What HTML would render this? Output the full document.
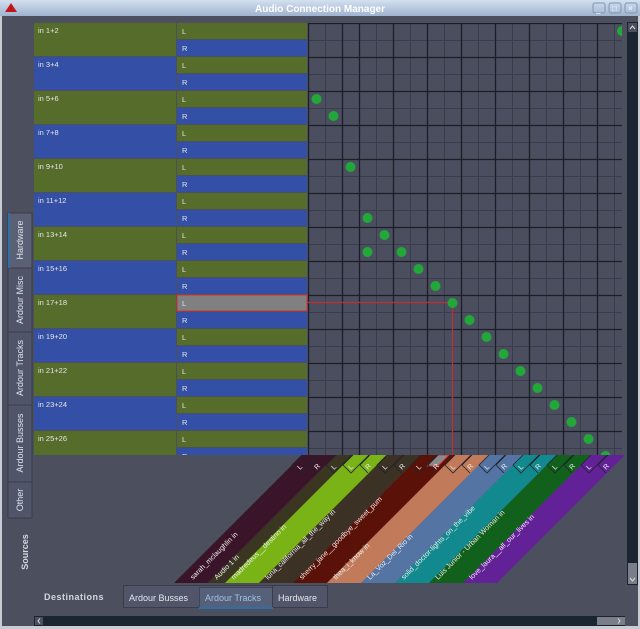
<!DOCTYPE html>
<html><head><meta charset="utf-8"><style>
html,body{margin:0;padding:0;width:640px;height:629px;overflow:hidden;background:#4b4f5e;font-family:"Liberation Sans",sans-serif}
svg{display:block}
</style></head><body>
<svg width="640" height="629" viewBox="0 0 640 629" font-family="Liberation Sans, sans-serif">
<defs>
<linearGradient id="tb" x1="0" y1="0" x2="0" y2="1"><stop offset="0" stop-color="#d3e0f0"/><stop offset="1" stop-color="#9fb3cf"/></linearGradient>
<clipPath id="lc"><rect x="0" y="23" width="640" height="432"/></clipPath>
<clipPath id="gc"><rect x="308" y="23" width="314" height="432"/></clipPath>
<clipPath id="bc"><rect x="34" y="455" width="590" height="128"/></clipPath>
</defs>
<rect width="640" height="629" fill="#4b4f5e"/>
<rect x="0" y="16" width="2" height="613" fill="#c9ccd4"/>
<rect x="638" y="16" width="2" height="613" fill="#c9ccd4"/>
<rect x="0" y="626" width="640" height="3" fill="#c9ccd4"/>
<!-- title bar -->
<rect x="0" y="0" width="640" height="16" fill="url(#tb)"/>
<polygon points="5,12 11,3 17,12" fill="#c01818"/>
<text x="320" y="12" text-anchor="middle" fill="#fff" font-size="10" font-weight="bold">Audio Connection Manager</text>
<g fill="none" stroke="#7f95b5"><rect x="593" y="3" width="12" height="10" rx="2"/><rect x="609" y="3" width="12" height="10" rx="2"/><rect x="625" y="3" width="12" height="10" rx="2"/></g>
<g fill="#fff" font-size="8"><text x="596" y="12">_</text><text x="612" y="11">□</text><text x="628" y="11">×</text></g>

<!-- left labels -->
<g clip-path="url(#lc)" fill="#e6e6e6" font-size="7.5">
<g id="rows">
<rect x="34" y="23" width="142" height="33" fill="#566c2b"/><rect x="177" y="23" width="130" height="16" fill="#566c2b"/><rect x="177" y="40" width="130" height="16" fill="#344fa6"/><text x="38" y="33">in 1+2</text><text x="182" y="34">L</text><text x="182" y="51">R</text>
<rect x="34" y="57" width="142" height="33" fill="#344fa6"/><rect x="177" y="57" width="130" height="16" fill="#566c2b"/><rect x="177" y="74" width="130" height="16" fill="#344fa6"/><text x="38" y="67">in 3+4</text><text x="182" y="68">L</text><text x="182" y="85">R</text>
<rect x="34" y="91" width="142" height="33" fill="#566c2b"/><rect x="177" y="91" width="130" height="16" fill="#566c2b"/><rect x="177" y="108" width="130" height="16" fill="#344fa6"/><text x="38" y="101">in 5+6</text><text x="182" y="102">L</text><text x="182" y="119">R</text>
<rect x="34" y="125" width="142" height="33" fill="#344fa6"/><rect x="177" y="125" width="130" height="16" fill="#566c2b"/><rect x="177" y="142" width="130" height="16" fill="#344fa6"/><text x="38" y="135">in 7+8</text><text x="182" y="136">L</text><text x="182" y="153">R</text>
<rect x="34" y="159" width="142" height="33" fill="#566c2b"/><rect x="177" y="159" width="130" height="16" fill="#566c2b"/><rect x="177" y="176" width="130" height="16" fill="#344fa6"/><text x="38" y="169">in 9+10</text><text x="182" y="170">L</text><text x="182" y="187">R</text>
<rect x="34" y="193" width="142" height="33" fill="#344fa6"/><rect x="177" y="193" width="130" height="16" fill="#566c2b"/><rect x="177" y="210" width="130" height="16" fill="#344fa6"/><text x="38" y="203">in 11+12</text><text x="182" y="204">L</text><text x="182" y="221">R</text>
<rect x="34" y="227" width="142" height="33" fill="#566c2b"/><rect x="177" y="227" width="130" height="16" fill="#566c2b"/><rect x="177" y="244" width="130" height="16" fill="#344fa6"/><text x="38" y="237">in 13+14</text><text x="182" y="238">L</text><text x="182" y="255">R</text>
<rect x="34" y="261" width="142" height="33" fill="#344fa6"/><rect x="177" y="261" width="130" height="16" fill="#566c2b"/><rect x="177" y="278" width="130" height="16" fill="#344fa6"/><text x="38" y="271">in 15+16</text><text x="182" y="272">L</text><text x="182" y="289">R</text>
<rect x="34" y="295" width="142" height="33" fill="#566c2b"/><rect x="177" y="295" width="130" height="16" fill="#808080" stroke="#d03030"/><rect x="177" y="312" width="130" height="16" fill="#344fa6"/><text x="38" y="305">in 17+18</text><text x="182" y="306">L</text><text x="182" y="323">R</text>
<rect x="34" y="329" width="142" height="33" fill="#344fa6"/><rect x="177" y="329" width="130" height="16" fill="#566c2b"/><rect x="177" y="346" width="130" height="16" fill="#344fa6"/><text x="38" y="339">in 19+20</text><text x="182" y="340">L</text><text x="182" y="357">R</text>
<rect x="34" y="363" width="142" height="33" fill="#566c2b"/><rect x="177" y="363" width="130" height="16" fill="#566c2b"/><rect x="177" y="380" width="130" height="16" fill="#344fa6"/><text x="38" y="373">in 21+22</text><text x="182" y="374">L</text><text x="182" y="391">R</text>
<rect x="34" y="397" width="142" height="33" fill="#344fa6"/><rect x="177" y="397" width="130" height="16" fill="#566c2b"/><rect x="177" y="414" width="130" height="16" fill="#344fa6"/><text x="38" y="407">in 23+24</text><text x="182" y="408">L</text><text x="182" y="425">R</text>
<rect x="34" y="431" width="142" height="33" fill="#566c2b"/><rect x="177" y="431" width="130" height="16" fill="#566c2b"/><rect x="177" y="448" width="130" height="16" fill="#344fa6"/><text x="38" y="441">in 25+26</text><text x="182" y="442">L</text><text x="182" y="459">R</text>
</g>
</g>

<!-- grid -->
<g clip-path="url(#gc)">
<rect x="308" y="23" width="314" height="432" fill="#4a4e5f"/>
<g stroke="#393d4a" stroke-width="1">
<path d="M308 40.5H622M308 74.5H622M308 108.5H622M308 142.5H622M308 176.5H622M308 210.5H622M308 244.5H622M308 278.5H622M308 312.5H622M308 346.5H622M308 380.5H622M308 414.5H622M308 448.5H622"/>
<path d="M325.5 23V455M376.5 23V455M410.5 23V455M444.5 23V455M478.5 23V455M512.5 23V455M546.5 23V455M580.5 23V455M614.5 23V455"/>
</g>
<g stroke="#1c1e26" stroke-width="1.3">
<path d="M308 23.5H622M308 57.5H622M308 91.5H622M308 125.5H622M308 159.5H622M308 193.5H622M308 227.5H622M308 261.5H622M308 295.5H622M308 329.5H622M308 363.5H622M308 397.5H622M308 431.5H622"/>
<path d="M308.5 23V455M342.5 23V455M359.5 23V455M393.5 23V455M427.5 23V455M461.5 23V455M495.5 23V455M529.5 23V455M563.5 23V455M597.5 23V455"/>
</g>
<path d="M308 302.5H452.5V455" stroke="#c03030" stroke-width="1.2" fill="none"/>
<g fill="#22a838">
<circle cx="622" cy="31" r="5"/><circle cx="316.5" cy="99" r="5"/><circle cx="333.5" cy="116" r="5"/><circle cx="350.5" cy="167" r="5"/><circle cx="367.5" cy="218" r="5"/><circle cx="384.5" cy="235" r="5"/><circle cx="367.5" cy="252" r="5"/><circle cx="401.5" cy="252" r="5"/><circle cx="418.5" cy="269" r="5"/><circle cx="435.5" cy="286" r="5"/><circle cx="452.5" cy="303" r="5"/><circle cx="469.5" cy="320" r="5"/><circle cx="486.5" cy="337" r="5"/><circle cx="503.5" cy="354" r="5"/><circle cx="520.5" cy="371" r="5"/><circle cx="537.5" cy="388" r="5"/><circle cx="554.5" cy="405" r="5"/><circle cx="571.5" cy="422" r="5"/><circle cx="588.5" cy="439" r="5"/><circle cx="605.5" cy="456" r="5"/>
</g>
</g>

<!-- bands -->
<g clip-path="url(#bc)">
<polygon points="302,455 336,455 208,583 174,583" fill="#3a1429"/>
<polygon points="336,455 353,455 225,583 208,583" fill="#3a3621"/>
<polygon points="353,455 387,455 259,583 225,583" fill="#79b316"/>
<polygon points="387,455 421,455 293,583 259,583" fill="#3b3124"/>
<polygon points="421,455 455,455 327,583 293,583" fill="#5a1208"/>
<polygon points="455,455 489,455 361,583 327,583" fill="#c27b5a"/>
<polygon points="489,455 523,455 395,583 361,583" fill="#5474a4"/>
<polygon points="523,455 557,455 429,583 395,583" fill="#12888f"/>
<polygon points="557,455 591,455 463,583 429,583" fill="#11611c"/>
<polygon points="591,455 625,455 497,583 463,583" fill="#632198"/>
<polygon points="438,455 449,455 438,466 427,466" fill="#8a8a8a" stroke="#d03030"/>
<g stroke="#22242c" stroke-width="0.8" fill="none">
<path d="M302 455l-10 10l8 8l18-18M319 455l-10 10l8 8M336 455l-10 10l8 8l18-18M353 455l-10 10l8 8l18-18M370 455l-10 10l8 8M387 455l-10 10l8 8l18-18M404 455l-10 10l8 8M421 455l-10 10l8 8l18-18M438 455l-10 10l8 8M455 455l-10 10l8 8l18-18M472 455l-10 10l8 8M489 455l-10 10l8 8l18-18M506 455l-10 10l8 8M523 455l-10 10l8 8l18-18M540 455l-10 10l8 8M557 455l-10 10l8 8l18-18M574 455l-10 10l8 8M591 455l-10 10l8 8l18-18M608 455l-10 10l8 8"/>
</g>
<g fill="#e8e8e8" font-size="7">
<text transform="translate(300,470) rotate(-45)">L</text><text transform="translate(317,470) rotate(-45)">R</text>
<text transform="translate(334,470) rotate(-45)">L</text>
<text transform="translate(351,470) rotate(-45)">L</text><text transform="translate(368,470) rotate(-45)">R</text>
<text transform="translate(385,470) rotate(-45)">L</text><text transform="translate(402,470) rotate(-45)">R</text>
<text transform="translate(419,470) rotate(-45)">L</text><text transform="translate(436,470) rotate(-45)">R</text>
<text transform="translate(453,470) rotate(-45)">L</text><text transform="translate(470,470) rotate(-45)">R</text>
<text transform="translate(487,470) rotate(-45)">L</text><text transform="translate(504,470) rotate(-45)">R</text>
<text transform="translate(521,470) rotate(-45)">L</text><text transform="translate(538,470) rotate(-45)">R</text>
<text transform="translate(555,470) rotate(-45)">L</text><text transform="translate(572,470) rotate(-45)">R</text>
<text transform="translate(589,470) rotate(-45)">L</text><text transform="translate(606,470) rotate(-45)">R</text>
</g>
<g fill="#ececec" font-size="7.2">
<text transform="translate(193,580) rotate(-45)">sarah_mclaughlin in</text>
<text transform="translate(217,580) rotate(-45)">Audio 1 in</text>
<text transform="translate(234,580) rotate(-45)">madredeus__destino in</text>
<text transform="translate(268,580) rotate(-45)">luna_california_all_the_way in</text>
<text transform="translate(302,580) rotate(-45)">sherry_jane__goodbye_sweet_pum</text>
<text transform="translate(336,580) rotate(-45)">thea_i_know in</text>
<text transform="translate(370,580) rotate(-45)">La_Voz_Del_Rio in</text>
<text transform="translate(404,580) rotate(-45)">solid_doctor-lights_on_the_vibe</text>
<text transform="translate(438,580) rotate(-45)">Luis Junior - Urban Woman in</text>
<text transform="translate(472,580) rotate(-45)">love_laura__all_our_lives in</text>
</g>
</g>

<!-- vertical tabs -->
<g stroke="#3a3d48" fill="#50556a">
<rect x="8" y="213" width="24" height="55" fill="#5a6075"/>
<rect x="8" y="268" width="24" height="64"/>
<rect x="8" y="332" width="24" height="73"/>
<rect x="8" y="405" width="24" height="77"/>
<rect x="8" y="482" width="24" height="36"/>
</g>
<rect x="8" y="213" width="2" height="55" fill="#2f6fa8"/>
<g fill="#e0e2e8" font-size="9" text-anchor="middle">
<text transform="translate(23,240) rotate(-90)">Hardware</text>
<text transform="translate(23,300) rotate(-90)">Ardour Misc</text>
<text transform="translate(23,368) rotate(-90)">Ardour Tracks</text>
<text transform="translate(23,443) rotate(-90)">Ardour Busses</text>
<text transform="translate(23,500) rotate(-90)">Other</text>
<text transform="translate(28,552) rotate(-90)" font-weight="bold" fill="#d4d6dc">Sources</text>
</g>

<!-- right scrollbar -->
<rect x="627" y="22" width="11" height="563" fill="#1b2431"/>
<rect x="628" y="23" width="9" height="9" fill="#4b4f5e"/>
<path d="M630 29l2.5-3l2.5 3" stroke="#ddd" fill="none"/>
<rect x="628" y="563" width="9" height="12" fill="#7a7e88"/>
<rect x="628" y="575" width="9" height="9" fill="#7a7e88"/>
<path d="M630 578l2.5 3l2.5-3" stroke="#ddd" fill="none"/>

<!-- bottom tabs -->
<text x="44" y="600" fill="#d4d6dc" font-size="9" font-weight="bold" letter-spacing="0.5">Destinations</text>
<rect x="123.5" y="585.5" width="204" height="22" fill="#50556a" stroke="#3a3d48"/>
<rect x="199.5" y="587.5" width="73" height="20" fill="#566079" stroke="#3f4556"/>
<rect x="199" y="607" width="74" height="2" fill="#2f6fa8"/>
<line x1="272.5" y1="586" x2="272.5" y2="607" stroke="#3a3d48"/>
<g font-size="9" fill="#e6e8ec"><text x="129" y="601">Ardour Busses</text><text x="205" y="601" fill="#9ec4e8">Ardour Tracks</text><text x="278" y="601">Hardware</text></g>

<!-- horizontal scrollbar -->
<rect x="34" y="616" width="591" height="10" fill="#1b2431"/>
<rect x="35" y="617" width="8" height="8" fill="#4b4f5e"/>
<path d="M40 618.5l-2 2.5l2 2.5" stroke="#ddd" fill="none"/>
<rect x="597" y="617" width="28" height="8" fill="#7a7e88"/>
<path d="M618 618.5l2 2.5l-2 2.5" stroke="#ddd" fill="none"/>
</svg>
</body></html>
